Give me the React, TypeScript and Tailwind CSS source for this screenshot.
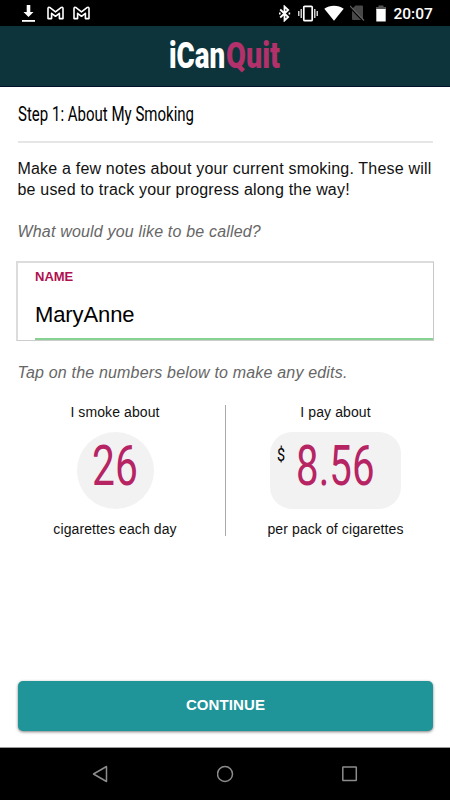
import React, { useState } from "react";

const MailIcon = () => (
  <svg width="17" height="14" viewBox="0 0 17 14" fill="none" stroke="#fff" strokeWidth="1.6" strokeLinejoin="round">
    <path d="M1 12.600V2.500Q1.100.800 2.700 1.400L8.500 5.900l5.800-4.500Q15.900.800 16 2.500V12.600H12.400V7.300L8.500 10.300 4.600 7.300V12.600z" />
  </svg>
);

const StatusBar = () => (
  <div className="h-[26px] bg-black text-white flex items-center justify-between pl-[22px] pr-[17px]">
    <div className="flex items-center">
      <svg width="13" height="18" viewBox="0 0 13 18" fill="#fff">
        <path d="M4.700 1h3.600v7h3.200l-5 5-5-5h3.200z" />
        <path d="M0 16h13v1.800H0z" />
      </svg>
      <div className="flex gap-[9.500px] ml-[11.500px]">
        <MailIcon />
        <MailIcon />
      </div>
    </div>
    <div className="flex items-center">
      <svg width="12" height="17" viewBox="0 0 12 17" fill="none" stroke="#fff" strokeWidth="1.800">
        <path d="M1.200 4.500l8 7.500-3.700 3.500v-14l3.700 3.500-8 7.500" />
        <path d="M0 7.600h1.600v1.800H0zM9.600 7.600h1.600v1.800H9.600z" fill="#fff" stroke="none" />
      </svg>
      <svg className="ml-[7px]" width="20" height="17" viewBox="0 0 20 17" fill="none" stroke="#fff">
        <rect x="5.800" y="1.300" width="8.400" height="14.400" rx="1" strokeWidth="1.700" />
        <path d="M3.200 4v9M.8 6v5M16.800 4v9M19.200 6v5" strokeWidth="1.200" />
      </svg>
      <svg className="ml-[6px]" width="20" height="16" viewBox="0 0 20 16" fill="#fff">
        <path d="M10 15.700L.3 3.700C5.500-.3 14.500-.3 19.700 3.700z" />
      </svg>
      <svg className="ml-[6px]" width="15" height="16" viewBox="0 0 15 16">
        <path d="M5.500.5H12q1 0 1 1V15H3q-1 0-1-1V4z" fill="#484848" />
        <path d="M0 2.500L13 16" stroke="#000" strokeWidth="1.500" />
        <path d="M0 1l14 14.500" stroke="#606060" strokeWidth="1.200" />
      </svg>
      <svg className="ml-[11px]" width="10" height="17" viewBox="0 0 10 17">
        <path d="M2.500.5h5V2H10v3H0V2h2.500z" fill="#555" />
        <path d="M.3 4h9.400v12.500H.3z" fill="#fff" />
      </svg>
      <span className="ml-[7.500px] w-[39.500px] pt-[2px] font-[Roboto] text-[15.500px] leading-[22px] font-medium whitespace-nowrap">20:07</span>
    </div>
  </div>
);

const Header = () => (
  <header className="h-[61px] bg-[#0d343a] border-b border-[#04102a] font-[Roboto] font-black text-[36px] leading-[60px] flex whitespace-nowrap pl-[169px]">
    <span className="w-[57px] text-white">
      <span className="inline-block origin-left scale-x-[0.77]">iCan</span>
    </span>
    <span className="text-[#b2316a]">
      <span className="inline-block origin-left scale-x-[0.8]">Quit</span>
    </span>
  </header>
);

const NavBar = () => (
  <nav className="h-[53px] bg-black border-t border-[#999] flex items-center justify-between pl-[92px] pr-[92px]">
    <svg width="17" height="18" viewBox="0 0 17 18" fill="none" stroke="#8c8c8c" strokeWidth="1.500" strokeLinejoin="round">
      <path d="M14.500 1.500v15L1.500 9z" />
    </svg>
    <svg width="18" height="18" viewBox="0 0 18 18" fill="none" stroke="#8c8c8c" strokeWidth="1.500">
      <circle cx="8" cy="9" r="7.500" />
    </svg>
    <svg width="16" height="16" viewBox="0 0 16 16" fill="none" stroke="#8c8c8c" strokeWidth="1.500">
      <rect x=".8" y="1" width="13.500" height="13.500" rx=".5" />
    </svg>
  </nav>
);

const App = () => {
  const [name, setName] = useState("MaryAnne");

  return (
    <div className="w-[450px] h-[800px] bg-white flex flex-col overflow-hidden font-['Liberation_Sans',sans-serif] text-[#111]">
      <StatusBar />
      <Header />
      <main className="flex-1 flex flex-col pl-[18px] pr-[17px]">
        <h1 className="h-[54px] border-b-2 box-content border-[#e6e6e6] font-[Roboto] text-[21px] leading-[54px] text-black whitespace-nowrap">
          <span className="inline-block origin-left scale-x-[0.715]">Step 1: About My Smoking</span>
        </h1>
        <p className="mt-[15px] -ml-[0.5px] text-[16px] leading-[21px] whitespace-nowrap tracking-[0.190px]">
          Make a few notes about your current smoking. These will
          <br />
          be used to track your progress along the way!
        </p>
        <p className="mt-[21px] -ml-[0.5px] text-[16px] leading-[21px] italic text-[#666] tracking-[0.180px]">What would you like to be called?</p>

        <label className="mt-[19px] -ml-[2px] -mr-[1px] h-[80px] border border-t-2 border-l-2 border-[#dcdcdc] border-r-[#c8c8c8] border-b-[#ccc] pl-[17px] flex flex-col justify-between">
          <span className="pt-[6px] text-[13px] leading-[16px] font-bold text-[#b00f50]">NAME</span>
          <input
            value={name}
            onChange={(e) => setName(e.target.value)}
            className="h-[50px] pt-[2px] border-b-2 border-[#86d293] text-[22px] text-black outline-none tracking-[-0.100px]"
          />
        </label>

        <p className="mt-[21px] -ml-[0.5px] text-[16px] leading-[21px] italic text-[#666] tracking-[0.180px]">Tap on the numbers below to make any edits.</p>

        <div className="mt-[22px] h-[131px] flex text-[14px] leading-[14px] text-center whitespace-nowrap tracking-[0.100px]">
          <div className="w-[208px] border-r border-[#aaa] pr-[13px] flex flex-col items-center">
            <span>I smoke about</span>
            <div className="mt-[13px] size-[77px] shrink-0 rounded-full bg-[#f2f2f2] flex justify-center font-[Roboto] text-[55px] leading-[68px] text-[#b62464]">
              <span className="inline-block scale-x-[0.74]">26</span>
            </div>
            <span className="mt-[13px]">cigarettes each day</span>
          </div>
          <div className="flex-1 pl-[12px] flex flex-col items-center">
            <span>I pay about</span>
            <div className="mt-[13px] w-[131px] h-[77px] shrink-0 rounded-[22px] bg-[#f2f2f2] flex font-[Roboto]">
              <span className="w-[9px] ml-[7px] text-[18px] leading-[46px] text-black">
                <span className="inline-block origin-left scale-x-[0.8]">$</span>
              </span>
              <span className="ml-[10px] text-[55px] leading-[68px] text-[#b62464]">
                <span className="inline-block origin-left scale-x-[0.73]">8.56</span>
              </span>
            </div>
            <span className="mt-[13px]">per pack of cigarettes</span>
          </div>
        </div>

        <button className="mt-auto mb-[16.500px] h-[50px] rounded-[5px] bg-[#1f9499] text-white text-[15px] tracking-[0.100px] font-bold shadow-[0_1px_3px_rgba(0,0,0,0.5)]">
          CONTINUE
        </button>
      </main>
      <NavBar />
    </div>
  );
};

export default App;
